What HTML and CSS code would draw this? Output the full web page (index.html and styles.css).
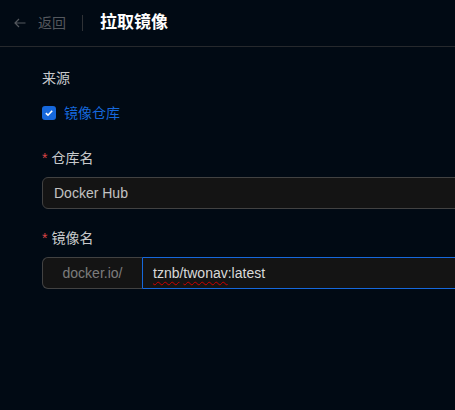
FILE: index.html
```html
<!DOCTYPE html>
<html lang="zh-CN">
<head>
<meta charset="utf-8">
<title>拉取镜像</title>
<link rel="stylesheet" href="styles.css">
</head>
<body>
<div class="page">
  <header class="header">
    <a class="back">
      <svg class="back-icon" width="12" height="12" viewBox="0 0 12 12" fill="none" stroke="currentColor" stroke-width="1.2">
        <path d="M11.5 6H1M5 2L1 6L5 10"/>
      </svg>
      <span>返回</span>
    </a>
    <span class="divider"></span>
    <h1 class="title">拉取镜像</h1>
  </header>
  <main class="content">
    <form class="form">
      <div class="item">
        <label class="label">来源</label>
        <div class="control">
          <label class="checkbox">
            <span class="box">
              <svg width="10" height="10" viewBox="0 0 10 10" fill="none" stroke="#fff" stroke-width="1.6"><path d="M1.8 5.2L4 7.2L8.2 2.8"/></svg>
            </span>
            <span class="check-text">镜像仓库</span>
          </label>
        </div>
      </div>
      <div class="item">
        <label class="label"><span class="req">*</span>仓库名</label>
        <div class="control">
          <div class="select">Docker Hub</div>
        </div>
      </div>
      <div class="item">
        <label class="label"><span class="req">*</span>镜像名</label>
        <div class="control group">
          <span class="addon">docker.io/</span>
          <span class="input focused"><span class="typo">tznb</span>/<span class="typo">twonav</span>:latest</span>
        </div>
      </div>
    </form>
  </main>
</div>
</body>
</html>
```
FILE: styles.css
```css
html, body {
  margin: 0;
  padding: 0;
  background: #010a14;
  overflow: hidden;
}
body {
  font-family: "Liberation Sans", "Noto Sans CJK SC", sans-serif;
  font-size: 14px;
  color: rgba(255,255,255,0.85);
  width: 455px;
  height: 410px;
}
.page {
  width: 455px;
  height: 410px;
}
.header {
  height: 46px;
  border-bottom: 1px solid #26292d;
  display: flex;
  align-items: center;
  padding-left: 14px;
  box-sizing: content-box;
}
.back {
  display: flex;
  align-items: center;
  gap: 12px;
  color: #54585e;
  font-size: 14px;
  line-height: 22px;
}
.back-icon {
  display: block;
}
.divider {
  width: 1px;
  height: 16px;
  background: #2f3236;
  margin: 0 17px 0 16px;
}
.title {
  margin: 0;
  font-size: 17px;
  font-weight: 700;
  color: #fff;
  line-height: 24px;
}
.content {
  padding: 20px 0 0 42px;
}
.form {
  width: 560px;
  display: flex;
  flex-direction: column;
  gap: 18px;
}
.item {
  display: flex;
  flex-direction: column;
}
.label {
  line-height: 22px;
  height: 22px;
  margin-bottom: 8px;
  color: rgba(255,255,255,0.8);
  font-size: 14px;
  display: flex;
  align-items: center;
}
.req {
  color: #dc4446;
  font-family: "Liberation Sans", sans-serif;
  font-size: 14px;
  margin-right: 4px;
  line-height: 1;
}
.control {
  height: 32px;
  display: flex;
  align-items: center;
}
.checkbox {
  display: flex;
  align-items: center;
  gap: 8px;
}
.box {
  width: 14px;
  height: 14px;
  border-radius: 3px;
  background: #1668dc;
  display: flex;
  align-items: center;
  justify-content: center;
}
.check-text {
  color: #1668dc;
  line-height: 22px;
}
.select, .input, .addon {
  box-sizing: border-box;
  height: 32px;
  line-height: 30px;
  background: #141414;
  border: 1px solid #424242;
}
.select {
  width: 100%;
  border-radius: 6px;
  padding: 0 11px;
  color: rgba(255,255,255,0.75);
}
.group {
  width: 100%;
}
.addon {
  width: 100px;
  flex: none;
  text-align: center;
  border-right: 0;
  border-radius: 6px 0 0 6px;
  color: rgba(255,255,255,0.45);
}
.input {
  flex: 1;
  padding: 0 10px;
  border-radius: 0 6px 6px 0;
  color: rgba(255,255,255,0.85);
}
.input.focused {
  border-color: #1668dc;
}
.typo {
  text-decoration: underline wavy #d00000;
  text-decoration-thickness: 1px;
  text-underline-offset: 3px;
}
```
